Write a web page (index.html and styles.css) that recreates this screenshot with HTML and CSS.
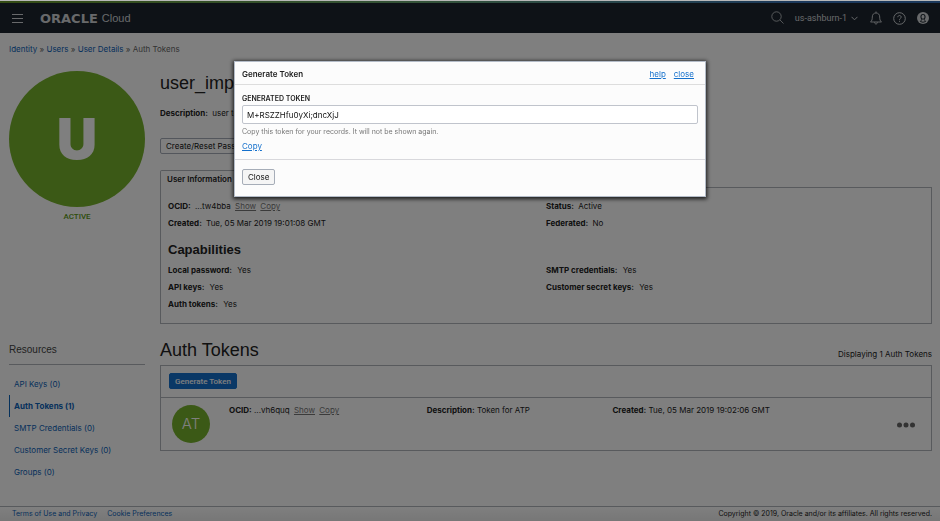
FILE: index.html
```html
<!DOCTYPE html>
<html lang="en">
<head>
    <meta charset="UTF-8">
    <meta name="viewport" content="width=device-width, initial-scale=1.0">
    <title>Auth Tokens - Oracle Cloud</title>
    <link rel="stylesheet" href="styles.css">
</head>
<body>
    <header class="topbar">
        <button class="icon-button menu-button" aria-label="Menu">
            <svg width="11" height="9" viewBox="0 0 11 9" fill="none" stroke="currentColor"><path d="M0 .5h11M0 4.5h11M0 8.5h11"/></svg>
        </button>
        <a class="logo" href="#"><span class="logo-name">ORACLE</span><span class="logo-product">Cloud</span></a>
        <div class="topbar-tools">
            <button class="icon-button search" aria-label="Search">
                <svg width="13" height="13" viewBox="0 0 13 13" fill="none" stroke="currentColor" stroke-width=".8"><circle cx="5.5" cy="5.5" r="4.7"/><path d="M9 9l3.5 3.5"/></svg>
            </button>
            <button class="icon-button region">us-ashburn-1
                <svg width="7" height="5" viewBox="0 0 7 5" fill="none" stroke="currentColor"><path d="M.5 .8l3 3 3-3"/></svg>
            </button>
            <button class="icon-button" aria-label="Notifications">
                <svg width="12" height="14" viewBox="0 0 12 14" fill="none" stroke="currentColor" stroke-width=".9"><path d="M.5 11h11c-1.4-1.2-1.8-2.4-1.8-5C9.700 3.500 8.300 2 6 2S2.300 3.500 2.300 6c0 2.600-.4 3.800-1.800 5zM6 2V.5M4.600 11.200c0 2.400 2.800 2.400 2.800 0"/></svg>
            </button>
            <button class="icon-button" aria-label="Help">
                <svg width="13" height="13" viewBox="0 0 13 13" fill="none" stroke="currentColor"><circle cx="6.500" cy="6.500" r="5.800"/><path d="M4.800 5.200c0-2.200 3.400-2.200 3.400-.1 0 1.300-1.700 1.300-1.700 2.700M6.500 8.800v1"/></svg>
            </button>
            <button class="icon-button" aria-label="Profile">
                <svg width="12" height="12" viewBox="0 0 12 12"><circle cx="6" cy="6" r="6" fill="currentColor"/><path d="M6 2C4.300 2 3.400 3.200 3.400 4.800c0 1.100.4 2 1 2.600 0 .8-.6 1.200-1.700 1.700C3.600 10.200 4.700 10.700 6 10.700s2.400-.5 3.300-1.600C8.200 8.600 7.600 8.200 7.600 7.400c.6-.6 1-1.500 1-2.600C8.600 3.200 7.700 2 6 2z" fill="#1c252f"/><path d="M6 3.100c-.9 0-1.500.7-1.500 1.700S5.100 6.800 6 6.800s1.500-1 1.500-2S6.900 3.100 6 3.100zM5.200 7.500h1.600L8 9.300C7 9.900 5 9.900 4 9.300z" fill="currentColor"/></svg>
            </button>
        </div>
    </header>

    <nav class="breadcrumb">
        <a href="#">Identity</a> » <a href="#">Users</a> » <a href="#">User Details</a> » <span>Auth Tokens</span>
    </nav>

    <section class="layout user">
        <aside class="profile">
            <div class="avatar">U</div>
            <div class="state">ACTIVE</div>
        </aside>
        <div class="main">
            <h1>user_imp</h1>
            <p class="description"><b>Description:</b> user to</p>
            <button class="button reset-button">Create/Reset Password</button>
            <div class="tab">User Information</div>
            <div class="info">
                <div class="info-grid">
                    <div><b>OCID:</b> ...tw4bba <a class="muted" href="#">Show</a> <a class="muted" href="#">Copy</a></div>
                    <div><b>Status:</b> Active</div>
                    <div><b>Created:</b> Tue, 05 Mar 2019 19:01:08 GMT</div>
                    <div><b>Federated:</b> No</div>
                </div>
                <h3>Capabilities</h3>
                <div class="info-grid capabilities">
                    <div><b>Local password:</b> Yes</div>
                    <div><b>SMTP credentials:</b> Yes</div>
                    <div><b>API keys:</b> Yes</div>
                    <div><b>Customer secret keys:</b> Yes</div>
                    <div><b>Auth tokens:</b> Yes</div>
                </div>
            </div>
        </div>
    </section>

    <section class="layout resources">
        <aside>
            <h4>Resources</h4>
            <nav class="resource-list">
                <a href="#">API Keys (0)</a>
                <a class="selected" href="#">Auth Tokens (1)</a>
                <a href="#">SMTP Credentials (0)</a>
                <a href="#">Customer Secret Keys (0)</a>
                <a href="#">Groups (0)</a>
            </nav>
        </aside>
        <div class="main">
            <div class="list-head">
                <h2>Auth Tokens</h2>
                <span>Displaying 1 Auth Tokens</span>
            </div>
            <div class="list">
                <div class="list-actions">
                    <button class="button primary">Generate Token</button>
                </div>
                <div class="list-row">
                    <div class="token-icon">AT</div>
                    <div><b>OCID:</b> ...vh6quq <a class="muted" href="#">Show</a> <a class="muted" href="#">Copy</a></div>
                    <div><b>Description:</b> Token for ATP</div>
                    <div><b>Created:</b> Tue, 05 Mar 2019 19:02:06 GMT</div>
                    <button class="icon-button more" aria-label="Actions">
                        <svg width="18" height="6" viewBox="0 0 18 6" fill="currentColor"><circle cx="2.500" cy="3" r="2.500"/><circle cx="9" cy="3" r="2.500"/><circle cx="15.500" cy="3" r="2.500"/></svg>
                    </button>
                </div>
            </div>
        </div>
    </section>

    <footer class="footer">
        <a href="#">Terms of Use and Privacy</a>
        <a href="#">Cookie Preferences</a>
        <span>Copyright © 2019, Oracle and/or its affiliates. All rights reserved.</span>
    </footer>

    <div class="backdrop">
        <div class="dialog" role="dialog" aria-labelledby="dialogTitle">
            <div class="dialog-head">
                <div class="dialog-title" id="dialogTitle">Generate Token</div>
                <a href="#">help</a>
                <a href="#">close</a>
            </div>
            <div class="dialog-body">
                <label for="generatedToken">GENERATED TOKEN</label>
                <input type="text" id="generatedToken" value="M+RSZZHfu0yXi;dncXjJ" readonly>
                <div class="hint">Copy this token for your records. It will not be shown again.</div>
                <a href="#">Copy</a>
            </div>
            <div class="dialog-foot">
                <button class="button">Close</button>
            </div>
        </div>
    </div>
</body>
</html>
```

FILE: styles.css
```css
* {
    box-sizing: border-box;
}
body {
    margin: 0;
    min-height: 100vh;
    display: flex;
    flex-direction: column;
    border-top: 1px solid #b8b8b8;
    font-family: Inter, "Liberation Sans", sans-serif;
    font-size: 8px;
    line-height: 17px;
    color: #222;
    background-color: #fff;
}
h1, h2, h3, h4, p {
    margin: 0;
}
h1, h2, h3, h4 {
    font-family: "Liberation Sans", Arial, sans-serif;
}
h1, h2 {
    font-size: 18px;
    line-height: 24px;
    font-weight: normal;
}
b {
    font-weight: 700;
}
a {
    color: #0b62b8;
    text-decoration: none;
}
button, input {
    font-family: inherit;
    font-size: 8px;
}

/* top bar */
.topbar {
    display: flex;
    align-items: center;
    height: 32px;
    padding: 2px 11px 0 12px;
    color: #d0d3d6;
    background: linear-gradient(to right, #6a9a2a, #6aa874 45%, #3872b8 85%) top / 100% 2px no-repeat #1c252f;
}
.icon-button {
    display: flex;
    align-items: center;
    padding: 0;
    border: 0;
    background: none;
    color: inherit;
}
.logo {
    display: flex;
    align-items: center;
    gap: 4px;
    margin-left: 17px;
    color: inherit;
}
.logo-name {
    font: bold 13px "DejaVu Sans", sans-serif;
}
.logo-product {
    font: 11px "Liberation Sans", sans-serif;
}
.topbar-tools {
    display: flex;
    align-items: center;
    gap: 11px;
    margin-left: auto;
}
.search {
    margin-top: -2px;
}
.region {
    gap: 4px;
    margin-right: 1px;
    font-family: Roboto, sans-serif;
    font-size: 9px;
}

.breadcrumb {
    padding: 8px 9px 0;
    color: #666;
}

/* two column layout */
.layout {
    display: grid;
    grid-template-columns: 136px minmax(0, 1fr);
    column-gap: 15px;
    padding: 0 8px 0 9px;
}
.user {
    margin-top: 13px;
}
.avatar {
    display: flex;
    align-items: center;
    justify-content: center;
    aspect-ratio: 1;
    border-radius: 50%;
    font-size: 56px;
    font-weight: 900;
    color: #fff;
    background-color: #77b22c;
}
.state {
    margin-top: 1px;
    text-align: center;
    font-family: Roboto, sans-serif;
    font-weight: 500;
    color: #5c9a14;
}
.description {
    margin-top: 10px;
}
.description b, .info b {
    margin-right: 2px;
}
.button {
    height: 16px;
    padding: 0 5px;
    border: 1px solid #a6adb8;
    border-radius: 2px;
    color: #111;
    background-color: #f5f5f5;
}
.reset-button {
    display: block;
    margin-top: 16px;
    background-color: #fff;
}
.tab {
    position: relative;
    width: 80px;
    height: 18px;
    margin: 16px 0 -1px;
    padding-left: 6px;
    border: 1px solid #b0b4ba;
    border-bottom: 0;
    border-radius: 2px 0 0;
    font-weight: 600;
    background-color: #fff;
}
.info {
    padding: 10px 7px;
    border: 1px solid #b0b4ba;
}
.info-grid {
    display: grid;
    grid-template-columns: 1fr 1fr;
}
.info h3 {
    margin: 11px 0 5px;
    font-size: 13px;
    line-height: 14px;
}
.info .capabilities b {
    margin-right: 3px;
}
.muted {
    margin-left: 2px;
    color: #777;
    text-decoration: underline;
}

/* resources and token list */
.resources {
    margin-top: 14px;
}
.resources h4 {
    padding-bottom: 2px;
    border-bottom: 1px solid #b0b4ba;
    font-size: 10px;
    line-height: 24px;
    font-weight: normal;
    color: #444;
}
.resource-list {
    display: flex;
    flex-direction: column;
    margin-top: 8px;
    line-height: 22px;
}
.resource-list a {
    padding-left: 4px;
    border-left: 1px solid transparent;
}
.resource-list .selected {
    border-color: #0b62b8;
    font-weight: 700;
}
.list-head {
    display: flex;
    justify-content: space-between;
    align-items: flex-end;
    height: 27px;
    padding-bottom: 2px;
}
.list-head h2 {
    align-self: flex-start;
}
.list {
    border: 1px solid #b0b4ba;
}
.list-actions {
    padding: 7px 8px 8px;
}
.list-actions .button {
    display: block;
}
.primary {
    border-color: #1470cc;
    color: #fff;
    background-color: #1470cc;
    font-family: Roboto, sans-serif;
    font-weight: 500;
}
.list-row {
    display: grid;
    grid-template-columns: 57px 198fr 186fr 285fr 18px;
    padding: 4px 16px 7px 11px;
    border-top: 1px solid #b0b4ba;
}
.token-icon {
    width: 38px;
    height: 38px;
    margin-top: 3px;
    border-radius: 50%;
    font-size: 15px;
    font-weight: 300;
    line-height: 38px;
    text-align: center;
    color: #fff;
    background-color: #77b22c;
}
.more {
    align-self: center;
    margin-top: 4px;
    color: #666;
}

.footer {
    display: flex;
    gap: 10px;
    margin-top: auto;
    padding: 0 8px 0 12px;
    border-top: 1px solid #b0b4ba;
    font-size: 7px;
    line-height: 14px;
    background: linear-gradient(#fff, #eee);
}
.footer span {
    margin-left: auto;
}

/* generated token dialog */
.backdrop {
    position: fixed;
    inset: 1px 0 0;
    padding-top: 60px;
    background-color: rgba(0, 0, 0, 0.5);
}
.dialog {
    width: 50%;
    min-width: 472px;
    margin: 0 auto;
    border: 1px solid #b4bcc8;
    background-color: #fcfcfc;
    box-shadow: 0 1px 4px 1px rgba(0, 0, 0, 0.8);
}
.dialog a {
    color: #1470cc;
    text-decoration: underline;
}
.dialog-head {
    display: flex;
    gap: 8px;
    padding: 4px 11px 1px 7px;
    border-bottom: 1px solid #ddd;
}
.dialog-title {
    margin-right: auto;
    font-weight: 600;
}
.dialog-body {
    padding: 8px 7px 6px;
    border-bottom: 1px solid #d8d8dc;
    line-height: 14px;
}
.dialog-body label {
    display: block;
    line-height: 12px;
    font-size: 7px;
    font-weight: 600;
}
.dialog-body input {
    display: block;
    width: 100%;
    height: 19px;
    margin-bottom: 1px;
    padding: 0 4px;
    border: 1px solid #c0c4cc;
    border-radius: 2px;
    color: #111;
    background-color: #fff;
}
.hint {
    font-size: 7px;
    color: #777;
}
.dialog-foot {
    padding: 9px 7px 11px;
}
.dialog-foot .button {
    display: block;
}
```
